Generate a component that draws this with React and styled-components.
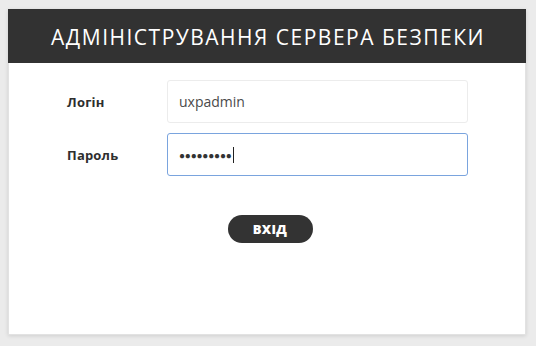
import React from "react";
import styled, { createGlobalStyle } from "styled-components";

const Global = createGlobalStyle`
  html, body { margin: 0; padding: 0; background: #ebebeb; }
  body { font-family: "Open Sans", "Liberation Sans", sans-serif; }
  * { box-sizing: border-box; }
`;

const Page = styled.div`
  width: 536px;
  height: 346px;
  padding: 9px 10px 11px 8px;
  background: #ebebeb;
`;

const Card = styled.div`
  width: 518px;
  height: 326px;
  background: #fff;
  border: 1px solid #e2e2e2;
  border-top: none;
  box-shadow: 0 1px 4px rgba(0, 0, 0, 0.12);
  display: flex;
  flex-direction: column;
`;

const Header = styled.div`
  height: 54px;
  margin: 0 -1px;
  background: #323232;
  display: flex;
  align-items: center;
  justify-content: center;
`;

const Title = styled.h1`
  margin: 0;
  color: #fff;
  font-family: "Open Sans", "Liberation Sans", sans-serif;
  font-weight: 400;
  font-size: 21px;
  letter-spacing: 1.5px;
  padding-top: 1px;
  padding-left: 2px;
`;

const Form = styled.div`
  padding: 17px 57px 0 57px;
  display: flex;
  flex-direction: column;
  gap: 10px;
`;

const Row = styled.div`
  display: grid;
  grid-template-columns: 101px 301px;
  align-items: center;
`;

const Label = styled.div`
  font-family: "Open Sans", "Liberation Sans", sans-serif;
  font-weight: 700;
  font-size: 13px;
  letter-spacing: 0.2px;
  color: #2e2e2e;
  padding-left: 1px;
`;

const Field = styled.div`
  height: 43px;
  border-radius: 3px;
  border: 1px solid ${(p) => (p.$focused ? "#7aa4de" : "#ececec")};
  display: flex;
  align-items: center;
  padding: 0 11px;
  font-family: "Open Sans", "Liberation Sans", sans-serif;
  font-size: 14px;
  color: #4a4a4a;
`;

const Dots = styled.span`
  font-size: 10px;
  letter-spacing: -0.2px;
  color: #333;
`;

const Caret = styled.span`
  display: inline-block;
  width: 1px;
  height: 16px;
  background: #222;
  margin-left: 1px;
`;

const Actions = styled.div`
  display: flex;
  justify-content: center;
  padding: 39px 0 0 6px;
`;

const Button = styled.button`
  width: 85px;
  height: 28px;
  border: none;
  border-radius: 14px;
  background: #333;
  color: #fff;
  font-family: "Open Sans", "Liberation Sans", sans-serif;
  font-weight: 800;
  font-size: 13px;
  letter-spacing: 0.3px;
  cursor: pointer;
`;

export default function App() {
  return (
    <>
      <Global />
      <Page>
        <Card>
          <Header>
            <Title>АДМІНІСТРУВАННЯ СЕРВЕРА БЕЗПЕКИ</Title>
          </Header>
          <Form>
            <Row>
              <Label>Логін</Label>
              <Field>uxpadmin</Field>
            </Row>
            <Row>
              <Label>Пароль</Label>
              <Field $focused>
                <Dots>●●●●●●●●●</Dots>
                <Caret />
              </Field>
            </Row>
          </Form>
          <Actions>
            <Button>ВХІД</Button>
          </Actions>
        </Card>
      </Page>
    </>
  );
}
